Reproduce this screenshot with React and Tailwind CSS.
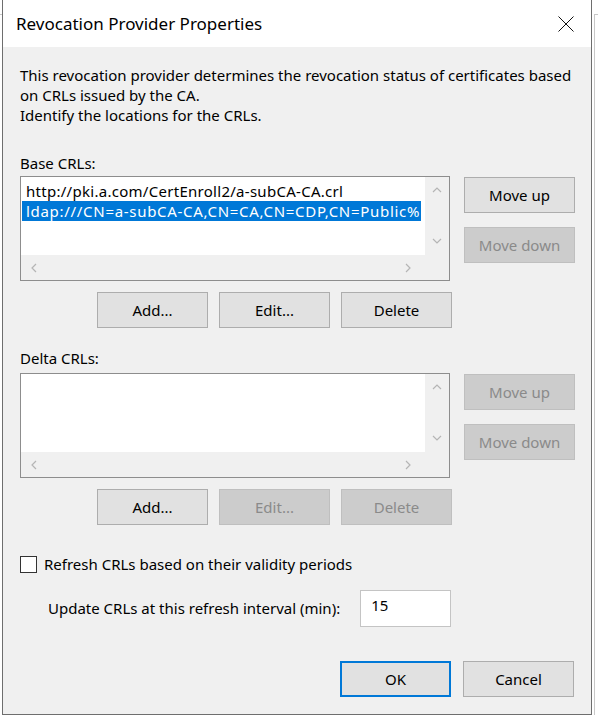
import React from 'react'

const font = { fontFamily: '"Segoe UI", "Noto Sans", "Open Sans", sans-serif' }

function Button({ children, disabled, primary, className = '' }) {
  return (
    <div
      className={
        'flex items-center justify-center w-[111px] h-[36px] border text-[15px] ' +
        (disabled
          ? 'bg-[#cccccc] border-[#bfbfbf] text-[#8a8a8a] '
          : primary
            ? 'bg-[#e1e1e1] border-[#0078d7] border-2 text-black '
            : 'bg-[#e1e1e1] border-[#adadad] text-black ') +
        className
      }
    >
      {children}
    </div>
  )
}

function Chevron({ dir }) {
  const paths = {
    up: 'M1 6 L5 2 L9 6',
    down: 'M1 2 L5 6 L9 2',
    left: 'M6 1 L2 5 L6 9',
    right: 'M2 1 L6 5 L2 9',
  }
  const vertical = dir === 'up' || dir === 'down'
  return (
    <svg width={vertical ? 10 : 8} height={vertical ? 8 : 10} viewBox={vertical ? '0 0 10 8' : '0 0 8 10'}>
      <path d={paths[dir]} fill="none" stroke="#b5b5b5" strokeWidth="1.2" />
    </svg>
  )
}

function ListBox({ items = [], selected }) {
  return (
    <div className="w-[430px] h-[105px] border border-[#8d8d8d] bg-white flex flex-col">
      <div className="flex flex-1 min-h-0">
        <div className="flex-1 pt-[4px] pl-[1px] text-[15px] leading-[20px] overflow-hidden whitespace-nowrap">
          {items.map((it, i) => (
            <div
              key={i}
              className={
                i === selected
                  ? 'bg-[#0078d7] text-white pl-[4px] w-[399px] tracking-[0.7px]'
                  : 'text-black pl-[4px] tracking-[0.28px]'
              }
            >
              {it}
            </div>
          ))}
        </div>
        <div className="w-[24px] bg-[#f0f0f0] flex flex-col items-center justify-between pt-[9px] pb-[10px]">
          <Chevron dir="up" />
          <Chevron dir="down" />
        </div>
      </div>
      <div className="h-[25px] bg-[#f0f0f0] flex items-center justify-between pl-[9px] pr-[37px]">
        <Chevron dir="left" />
        <Chevron dir="right" />
      </div>
    </div>
  )
}

export default function App() {
  return (
    <div className="w-[598px] h-[725px] bg-white relative" style={font}>
      {/* windows behind the dialog */}
      <div className="absolute left-0 top-[14px] w-[2px] border-t border-[#c8c8c8]" />
      <div className="absolute left-[594px] top-[14px] w-[4px] h-[701px] border-t border-l border-[#c8c8c8]" />

      <div className="relative ml-[2px] w-[590px] h-[715px] border-l border-r border-b border-[#6e6e6e] flex flex-col">
        {/* Title bar */}
        <div className="h-[47px] bg-white flex items-center justify-between pl-[13px] pr-[17px]">
          <span className="text-[17px] text-black">Revocation Provider Properties</span>
          <svg width="16" height="16" viewBox="0 0 16 16">
            <path d="M0.5 0.5 L15.5 15.5 M15.5 0.5 L0.5 15.5" stroke="#111" strokeWidth="1" />
          </svg>
        </div>

        {/* Body */}
        <div className="flex-1 bg-[#f0f0f0] pl-[17px] pt-[18px] text-[15px] text-black">
          <div className="leading-[20px]">
            <div>This revocation provider determines the revocation status of certificates based</div>
            <div>on CRLs issued by the CA.</div>
            <div>Identify the locations for the CRLs.</div>
          </div>

          <div className="mt-[28px] leading-[20px]">Base CRLs:</div>
          <div className="mt-[3px] flex">
            <ListBox
              items={[
                'http://pki.a.com/CertEnroll2/a-subCA-CA.crl',
                'ldap:///CN=a-subCA-CA,CN=CA,CN=CDP,CN=Public%',
              ]}
              selected={1}
            />
            <div className="ml-[14px] flex flex-col gap-[14px] pt-[1px]">
              <Button>Move up</Button>
              <Button disabled>Move down</Button>
            </div>
          </div>
          <div className="mt-[11px] ml-[77px] flex gap-[11px]">
            <Button>Add...</Button>
            <Button>Edit...</Button>
            <Button>Delete</Button>
          </div>

          <div className="mt-[20px] leading-[20px]">Delta CRLs:</div>
          <div className="mt-[5px] flex">
            <ListBox />
            <div className="ml-[14px] flex flex-col gap-[14px] pt-[1px]">
              <Button disabled>Move up</Button>
              <Button disabled>Move down</Button>
            </div>
          </div>
          <div className="mt-[11px] ml-[77px] flex gap-[11px]">
            <Button>Add...</Button>
            <Button disabled>Edit...</Button>
            <Button disabled>Delete</Button>
          </div>

          <div className="mt-[30px] flex items-center h-[18px]">
            <div className="w-[17px] h-[17px] border border-[#333] bg-white" />
            <span className="ml-[7px]">Refresh CRLs based on their validity periods</span>
          </div>

          <div className="mt-[17px] flex items-center ml-[28px]">
            <span>Update CRLs at this refresh interval (min):</span>
            <div className="ml-[20px] w-[91px] h-[37px] border border-[#c4c4c4] bg-white pl-[10px] pt-[4px] leading-[20px]">
              15
            </div>
          </div>

          <div className="mt-[34px] ml-[320px] flex gap-[12px]">
            <Button primary>OK</Button>
            <Button>Cancel</Button>
          </div>
        </div>
      </div>
    </div>
  )
}
